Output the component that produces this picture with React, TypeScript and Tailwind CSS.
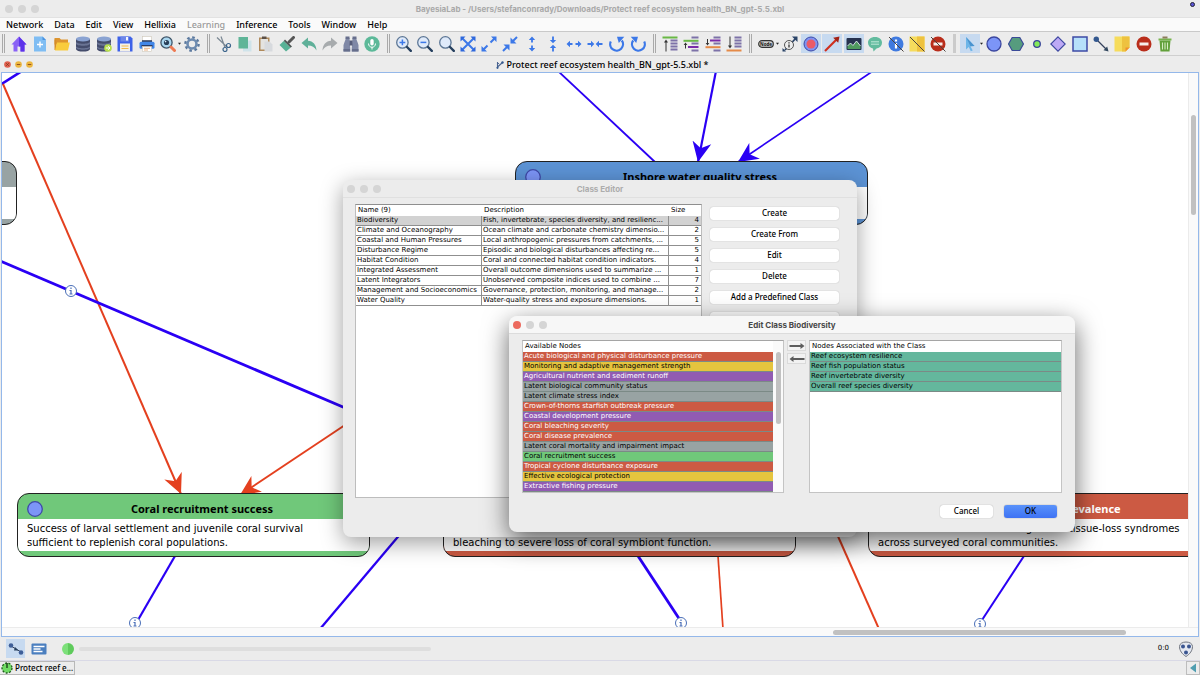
import { useState } from "react";
import type { ReactNode } from "react";

const menus = ["Network", "Data", "Edit", "View", "Hellixia", "Learning", "Inference", "Tools", "Window", "Help"];

const classes = [
  { name: "Biodiversity", description: "Fish, invertebrate, species diversity, and resilienc...", size: 4 },
  { name: "Climate and Oceanography", description: "Ocean climate and carbonate chemistry dimensio...", size: 2 },
  { name: "Coastal and Human Pressures", description: "Local anthropogenic pressures from catchments, ...", size: 5 },
  { name: "Disturbance Regime", description: "Episodic and biological disturbances affecting re...", size: 5 },
  { name: "Habitat Condition", description: "Coral and connected habitat condition indicators.", size: 4 },
  { name: "Integrated Assessment", description: "Overall outcome dimensions used to summarize ...", size: 1 },
  { name: "Latent Integrators", description: "Unobserved composite indices used to combine ...", size: 7 },
  { name: "Management and Socioeconomics", description: "Governance, protection, monitoring, and manage...", size: 2 },
  { name: "Water Quality", description: "Water-quality stress and exposure dimensions.", size: 1 },
];

const red = "bg-[#cc5a43] text-white";
const yellow = "bg-[#e5c43e] text-black";
const purple = "bg-[#915bb2] text-white";
const gray = "bg-[#98a3a3] text-black";
const green = "bg-[#70c87a] text-black";
const teal = "bg-[#64b79d] text-black";

const availableNodes = [
  { name: "Acute biological and physical disturbance pressure", color: red },
  { name: "Monitoring and adaptive management strength", color: yellow },
  { name: "Agricultural nutrient and sediment runoff", color: purple },
  { name: "Latent biological community status", color: gray },
  { name: "Latent climate stress index", color: gray },
  { name: "Crown-of-thorns starfish outbreak pressure", color: red },
  { name: "Coastal development pressure", color: purple },
  { name: "Coral bleaching severity", color: red },
  { name: "Coral disease prevalence", color: red },
  { name: "Latent coral mortality and impairment impact", color: gray },
  { name: "Coral recruitment success", color: green },
  { name: "Tropical cyclone disturbance exposure", color: red },
  { name: "Effective ecological protection", color: yellow },
  { name: "Extractive fishing pressure", color: purple },
];

const classNodes = [
  { name: "Reef ecosystem resilience", color: teal },
  { name: "Reef fish population status", color: teal },
  { name: "Reef invertebrate diversity", color: teal },
  { name: "Overall reef species diversity", color: teal },
];

const graphNodes = [
  { title: "", body: "", color: "bg-[#98a3a3] text-black", place: "left-[-338px] top-[88px]" },
  { title: "Inshore water quality stress", body: "", color: "bg-[#5c93d5] text-black", place: "left-[513px] top-[88px]" },
  {
    title: "Coral recruitment success",
    body: "Success of larval settlement and juvenile coral survival\nsufficient to replenish coral populations.",
    color: "bg-[#70c87a] text-black",
    place: "left-[15px] top-[420px]",
  },
  {
    title: "Coral bleaching severity",
    body: "Severity of coral bleaching ranging from no visible\nbleaching to severe loss of coral symbiont function.",
    color: "bg-[#cc5a43] text-white",
    place: "left-[441px] top-[420px]",
  },
  {
    title: "Coral disease prevalence",
    body: "Prevalence of coral disease signs and tissue-loss syndromes\nacross surveyed coral communities.",
    color: "bg-[#cc5a43] text-white",
    place: "left-[866px] top-[420px]",
  },
];

const blueLine = "#2a00f4";
const redLine = "#e4401f";

const edges = [
  { from: [0, 85], to: [22, 71], color: blueLine, width: 2.6, arrow: false },
  { from: [3, 84], to: [181, 494], color: redLine, width: 2, arrow: true },
  { from: [360, 415], to: [240, 495], color: redLine, width: 2, arrow: true },
  { from: [0, 261], to: [350, 410], color: blueLine, width: 2.8, arrow: false },
  { from: [558, 71], to: [655, 162], color: blueLine, width: 1.8, arrow: false },
  { from: [716, 71], to: [698, 162], color: blueLine, width: 2.2, arrow: true },
  { from: [873, 71], to: [738, 162], color: blueLine, width: 1.7, arrow: true },
  { from: [175, 556], to: [138, 620], color: blueLine, width: 2.2, arrow: false },
  { from: [402, 532], to: [320, 629], color: blueLine, width: 2.3, arrow: false },
  { from: [638, 556], to: [680, 620], color: blueLine, width: 2.8, arrow: false },
  { from: [718, 556], to: [723, 629], color: redLine, width: 1.7, arrow: false },
  { from: [837, 534], to: [879, 629], color: redLine, width: 2, arrow: false },
  { from: [1024, 556], to: [982, 620], color: blueLine, width: 2, arrow: false },
];

const infoPins = [[71, 291], [135, 623], [681, 623], [980, 624]];

/* ---------- Icons ---------- */

const lens = (
  <>
    <circle cx="6.400" cy="6.400" r="5.700" fill="#dfeafa" stroke="#5d7796" strokeWidth="1.300" />
    <path d="M11 11l3.800 3.800" stroke="#26405f" strokeWidth="2.400" strokeLinecap="round" />
  </>
);

const slash = <path d="M1 1l14.500 14.500" stroke="#4b4440" strokeWidth="1" />;

const database = (
  <>
    <path d="M1 3v10c0 3.400 14 3.400 14 0V3z" fill="#444c6b" />
    <path d="M1 5.500c0 3 14 3 14 0v2c0 3-14 3-14 0zM1 10c0 3 14 3 14 0v1.500c0 3-14 3-14 0z" fill="#6a7494" />
    <ellipse cx="8" cy="3" rx="7" ry="2.600" fill="#8aa3d2" />
  </>
);

const noEntry = (
  <>
    <circle cx="8" cy="8" r="7.500" fill="#b92d1b" />
    <rect x="3.500" y="6.500" width="9" height="3" fill="#f6ece9" />
  </>
);

const note = (
  <>
    <path d="M.5.5h15v11l-4 4H.5z" fill="#f6dc5c" />
    <path d="M8 .5h7.500v11l-4 4H8z" fill="#eec23f" />
    <path d="M11.500 11.500h4l-4 4z" fill="#f0902f" />
  </>
);

const levels = <path d="M8.500 4.500h7M8.500 7.500h7M8.500 10.500h7M8.500 13.500h7" stroke="#7d72a8" strokeWidth="2" />;

const arrowStroke = { stroke: "#3c78e8", strokeWidth: 1.5, fill: "none" };

const icons: Record<string, ReactNode> = {
  Home: (
    <>
      <path d="M8 .5L.5 8.500h2V15.500h4v-5h3v5h4v-7h2z" fill="#8a62f5" />
      <path d="M8 .5l7.500 8h-2v7h-4v-5H8z" fill="#5d33ea" />
    </>
  ),
  "New network": (
    <>
      <path d="M2 .5h8.500l3.500 3.500v11.500H2z" fill="#7fbdf3" />
      <path d="M10.500.5L14 4h-3.500z" fill="#4b93e0" />
      <path d="M8 5.500v6M5 8.500h6" stroke="#fff" strokeWidth="1.400" />
    </>
  ),
  Open: (
    <>
      <path d="M.5 2h5l1.500 1.500h7v5H.5z" fill="#dd9530" />
      <path d="M.5 14V3.500h1.500L3 14z" fill="#d58c28" />
      <path d="M3 6.500h12.800L14 14.500H1z" fill="#f9cc3d" />
    </>
  ),
  "Open data": database,
  "Import data": (
    <>
      {database}
      <circle cx="12" cy="12" r="3.800" fill="#b7df4c" />
      <path d="M9.800 12h4M12.200 10.200l1.800 1.800-1.800 1.800" stroke="#fff" strokeWidth="1" fill="none" />
    </>
  ),
  Save: (
    <>
      <path d="M.5.5h13l2 2v13H.5z" fill="#3e62e8" />
      <rect x="3.500" y=".5" width="8.500" height="5" fill="#6d86e9" />
      <rect x="9" y="1" width="2" height="3.500" fill="#f4f6ff" />
      <rect x="3" y="7.500" width="10" height="8" fill="#f3f0e8" />
      <path d="M4.500 10h7M4.500 12.500h7" stroke="#f2b84a" strokeWidth="1.200" />
    </>
  ),
  Print: (
    <>
      <rect x="3.500" y=".5" width="9" height="6" fill="#fff" stroke="#cfc8ba" strokeWidth=".6" />
      <rect x="3" y="4.200" width="10" height="1.800" fill="#33415f" />
      <rect x=".5" y="5.800" width="15" height="7" rx="1.500" fill="#4287e8" />
      <rect x="2.500" y="9" width="11" height="1.800" fill="#2c3b63" />
      <rect x="3.500" y="10.500" width="9" height="5" fill="#fff" stroke="#cfc8ba" strokeWidth=".6" />
      <path d="M5 12.300h6M5 14h4" stroke="#e8a978" strokeWidth=".9" />
    </>
  ),
  Preview: (
    <>
      <circle cx="6.500" cy="6.500" r="5.600" fill="#a9d6ef" stroke="#3d5468" strokeWidth="1.300" />
      <circle cx="6.500" cy="6.500" r="2.600" fill="#28405a" />
      <circle cx="5.600" cy="5.600" r=".8" fill="#dff1fb" />
      <path d="M11 11l3.500 3.500" stroke="#ee7a53" strokeWidth="3" strokeLinecap="round" />
    </>
  ),
  Settings: (
    <>
      <circle cx="8" cy="8" r="6.600" fill="none" stroke="#5a789e" strokeWidth="2.400" strokeDasharray="2.600 2.580" />
      <circle cx="8" cy="8" r="4.500" fill="none" stroke="#6d8bb0" strokeWidth="2.600" />
    </>
  ),
  Cut: (
    <>
      <path d="M1 1.500l9.500 9M5 .5l4 11" stroke="#7b8894" strokeWidth="1.200" />
      <circle cx="12.500" cy="9.500" r="2" fill="none" stroke="#3c658c" strokeWidth="1.200" />
      <circle cx="9" cy="13.500" r="2" fill="none" stroke="#3c658c" strokeWidth="1.200" />
    </>
  ),
  Copy: (
    <>
      <rect x="6" y="4.500" width="8.500" height="11" fill="#cfe3ea" />
      <rect x="1.500" y="1" width="9.500" height="11.500" fill="#5fb598" />
    </>
  ),
  Paste: (
    <>
      <rect x="1" y="1.500" width="10.500" height="13.500" fill="#b08a5b" />
      <rect x="2.500" y="3" width="7.500" height="10.500" fill="#e4e3e0" />
      <rect x="4" y=".5" width="4.500" height="2.500" fill="#5c5148" />
      <path d="M6.500 5.500h5l3 3v7h-8z" fill="#d7dade" />
    </>
  ),
  "Format painter": (
    <>
      <path d="M14.500 1.500L10 6" stroke="#555" strokeWidth="3" strokeLinecap="round" />
      <path d="M6 3.500l7 7-1.500 1.300L4.700 5z" fill="#4e5554" />
      <path d="M4.700 5l6.800 6.800-4.500 3.700L.5 9z" fill="#58b196" />
    </>
  ),
  Undo: <path d="M7 1.500L.5 7 7 12.500V9.500c4 0 6.500 1.500 8.500 5C15.300 8.500 12 5 7 4.700z" fill="#5fb099" />,
  Redo: <path d="M9 1.500L15.500 7 9 12.500V9.500c-4 0-6.500 1.500-8.500 5C.7 8.500 4 5 9 4.700z" fill="#a7abad" />,
  Find: (
    <>
      <path d="M3 2h3.500l1 13.500H.5V9z" fill="#7f88a6" />
      <path d="M13 2H9.500l-1 13.500h7V9z" fill="#7f88a6" />
      <rect x="6.500" y="4.500" width="3" height="5" fill="#565d7a" />
      <path d="M2.500.5h4V3h-4zM9.500.5h4V3h-4zM.5 13h6.500v2.500H.5zM9 13h6.500v2.500H9z" fill="#666e8c" />
    </>
  ),
  Dictate: (
    <>
      <circle cx="8" cy="8" r="7.700" fill="#5cb999" />
      <rect x="6.300" y="3" width="3.400" height="6.500" rx="1.700" fill="#fff" />
      <path d="M4.500 7.500c0 5 7 5 7 0M8 11v2.500" stroke="#fff" fill="none" />
    </>
  ),
  "Zoom in": <>{lens}<path d="M6.400 3.500v5.800M3.500 6.400h5.800" stroke="#3c78e8" strokeWidth="1.500" /></>,
  "Zoom out": <>{lens}<path d="M3.500 6.400h5.800" stroke="#3c78e8" strokeWidth="1.500" /></>,
  "Default zoom": lens,
  "Fit to window": (
    <>
      <path d="M2 2l12 12M14 2L2 14" {...arrowStroke} strokeWidth="2" />
      <path d="M.5.500h5l-5 5zM15.500.5v5l-5-5zM.5 15.500v-5l5 5zM15.500 15.500h-5l5-5z" fill="#2f68dc" />
    </>
  ),
  Expand: (
    <>
      <path d="M2 14l4.500-4.500M9.500 6.500L14 2" {...arrowStroke} strokeWidth="2" />
      <path d="M15.500.5v5.500L10 .5zM.5 15.500V10L6 15.500z" fill="#3c78e8" />
    </>
  ),
  Shrink: (
    <>
      <path d="M1 15l4-4M11 5l4-4" {...arrowStroke} strokeWidth="2" />
      <path d="M7.500 8.500v6l-6-6zM8.500 7.500v-6l6 6z" fill="#3c78e8" />
    </>
  ),
  "Expand vertically": (
    <>
      <path d="M8 3v3.500M8 9.500V13" {...arrowStroke} strokeWidth="1.800" />
      <path d="M8 .5L11.200 4H4.800zM8 15.500l3.200-3.500H4.800z" fill="#3c78e8" />
    </>
  ),
  "Shrink vertically": (
    <>
      <path d="M8 .5v4M8 11.500v4" {...arrowStroke} strokeWidth="1.800" />
      <path d="M8 7.300L11.200 4H4.800zM8 8.700l3.200 3.300H4.800z" fill="#3c78e8" />
    </>
  ),
  "Expand horizontally": (
    <>
      <path d="M3 8h3.500M9.500 8H13" {...arrowStroke} strokeWidth="1.800" />
      <path d="M.5 8L4 4.800v6.400zM15.500 8L12 4.800v6.400z" fill="#3c78e8" />
    </>
  ),
  "Shrink horizontally": (
    <>
      <path d="M.5 8h4M11.500 8h4" {...arrowStroke} strokeWidth="1.800" />
      <path d="M7.300 8L4 4.800v6.400zM8.700 8L12 4.800v6.400z" fill="#3c78e8" />
    </>
  ),
  "Rotate left": (
    <>
      <path d="M1.800 5.500a6.400 6.400 0 1 0 11-1" {...arrowStroke} strokeWidth="2.200" />
      <path d="M8 .8h7.300L9.800 7z" fill="#3c78e8" />
    </>
  ),
  "Rotate right": (
    <>
      <path d="M14.200 5.500a6.400 6.400 0 1 1-11-1" {...arrowStroke} strokeWidth="2.200" />
      <path d="M8 .8H.7L6.200 7z" fill="#3c78e8" />
    </>
  ),
  "To first level": (
    <>
      {levels}
      <path d="M.5 1.500h15" stroke="#69b845" strokeWidth="2" />
      <path d="M4 15.500V5" stroke="#333" />
      <path d="M4 3.500l2 3H2z" fill="#333" />
    </>
  ),
  "Up one level": (
    <>
      <path d="M8.500 1.500h7M8.500 7.500h7M8.500 14.500h7" stroke="#7d72a8" strokeWidth="2" />
      <path d="M.5 4.800h15" stroke="#69b845" strokeWidth="2" />
      <path d="M5 11h10.500" stroke="#7a2ba8" strokeWidth="2" />
      <path d="M2.500 12.500V8" stroke="#333" />
      <path d="M2.500 6.500l1.800 2.500H.7z" fill="#333" />
    </>
  ),
  "Down one level": (
    <>
      <path d="M8.500 1.500h7M8.500 7.500h7M8.500 14.500h7" stroke="#7d72a8" strokeWidth="2" />
      <path d="M.5 11.200h15" stroke="#e58a48" strokeWidth="2" />
      <path d="M5 4.500h10.500" stroke="#7a2ba8" strokeWidth="2" />
      <path d="M2.500 3v5" stroke="#333" />
      <path d="M2.500 9.500L4.300 7H.7z" fill="#333" />
    </>
  ),
  "To last level": (
    <>
      <path d="M8.500 1.500h7M8.500 4.500h7M8.500 7.500h7M8.500 10.500h7" stroke="#7d72a8" strokeWidth="2" />
      <path d="M.5 14.500h15" stroke="#e58a48" strokeWidth="2" />
      <path d="M4 .5V11" stroke="#333" />
      <path d="M4 12.500l2-3H2z" fill="#333" />
    </>
  ),
  "Node style": (
    <>
      <rect x=".7" y="4.700" width="14.600" height="6.600" rx="3.300" fill="#cfcfcf" stroke="#333" strokeWidth="1.200" />
      <text x="8" y="9.800" textAnchor="middle" fontSize="4.500" fontWeight="bold" fill="#111">Node</text>
    </>
  ),
  "Arc comments": (
    <>
      <path d="M3 14L14 2" stroke="#2a4468" strokeWidth="1.800" />
      <path d="M15.500.5v5.500L10 .5zM.5 15.500v-3.500L4 15.500z" fill="#2a4468" />
      <circle cx="7" cy="9" r="4.500" fill="#eee" stroke="#444" strokeWidth=".9" />
      <path d="M7 8.500v3M7 6.300v1.100" stroke="#222" strokeWidth="1.200" />
    </>
  ),
  "Node colors": (
    <>
      <circle cx="8" cy="8" r="7" fill="#7f93f2" stroke="#3d4aa5" />
      <circle cx="8" cy="8" r="4.500" fill="#ea5b68" />
    </>
  ),
  "Arc colors": (
    <>
      <path d="M1 15L13 3" stroke="#cf2f1e" strokeWidth="2.200" />
      <path d="M15.500.5l-1.300 6.300L9.200 1.800z" fill="#a32216" />
    </>
  ),
  Images: (
    <>
      <rect x=".5" y="2" width="15" height="12" rx="1" fill="#26324f" />
      <path d="M1.500 10l3-3 2.500 2.500 3.500-4.500 4 5v3h-13z" fill="#4f9a5e" />
      <path d="M1.500 10l3-3 2.500 2.500 3.500-4.500 4 5" stroke="#dfe8ee" strokeWidth=".9" fill="none" />
    </>
  ),
  Comments: (
    <>
      <path d="M8 1C3.500 1 1 3.500 1 6.800c0 3 2 5 5 5.700L6.500 15.500l3-3c3.500-.5 5.500-2.700 5.500-5.700C15 3.500 12.500 1 8 1z" fill="#62bb9e" />
      <path d="M4 5.800h8M4 8.200h8" stroke="#bfe8d9" />
    </>
  ),
  "Hide info": (
    <>
      <circle cx="8" cy="8" r="7.500" fill="#3f7ae0" />
      <path d="M8 7v5.500M8 3.500v2" stroke="#fff" strokeWidth="2.200" />
      {slash}
    </>
  ),
  "Hide notes": (
    <>
      <path d="M.5.5h15v15H.5z" fill="#f6dc5c" />
      <path d="M8 .5h7.500v15H8z" fill="#eec23f" />
      {slash}
    </>
  ),
  "Hide forbidden arcs": <>{noEntry}{slash}</>,
  Select: (
    <>
      <path d="M4 1l8.500 9-4 .2 2.200 4.300-1.900.8-2-4.400L4 13.500z" fill="#6db5e8" />
      <path d="M4 1l8.500 9-4 .2z" fill="#4a93cf" />
    </>
  ),
  "Create node": <circle cx="8" cy="8" r="7" fill="#7c95f7" stroke="#3b469f" strokeWidth="1.300" />,
  "Create function node": <path d="M4.200 1.500h7.600L15.500 8l-3.700 6.500H4.200L.5 8z" fill="#569c7e" stroke="#3a4a98" strokeWidth="1.200" />,
  "Create constraint": <circle cx="8" cy="8" r="3.300" fill="#84e85b" stroke="#37429a" strokeWidth="1.300" />,
  "Create utility": <path d="M8 .8L15.200 8 8 15.200.8 8z" fill="#bda9f5" stroke="#3b469f" strokeWidth="1.100" />,
  "Create decision": <rect x="1" y="1" width="14" height="14" fill="#b6e0fa" stroke="#3d4aa5" strokeWidth="1.500" />,
  "Create arc": (
    <>
      <path d="M3 3l10.500 10.500" stroke="#34415c" strokeWidth="1.200" />
      <circle cx="3.300" cy="3.300" r="2.700" fill="#33588f" />
      <path d="M15.500 15.500l-5-1.300 3.700-3.700z" fill="#33485f" />
    </>
  ),
  "Create note": note,
  "Forbid arc": noEntry,
  "Delete selection": (
    <>
      <path d="M2.500 4.500h11l-1 11h-9z" fill="#62a03b" />
      <path d="M5.500 6.500v7M8 6.500v7M10.500 6.500v7" stroke="#d4ecc2" strokeWidth="1.100" />
      <rect x="1.500" y="2.500" width="13" height="2" fill="#77b34d" />
      <rect x="5.500" y=".5" width="5" height="2" fill="#8d7d5c" />
    </>
  ),
};

const toolGroups = [
  { width: "w-[193px]", tools: ["Home", "New network", "Open", "Open data", "Import data", "Save", "Print", "Preview", "Settings"] },
  { width: "w-[168px]", tools: ["Cut", "Copy", "Paste", "Format painter", "Undo", "Redo", "Find", "Dictate"] },
  {
    width: "w-[254px]",
    tools: ["Zoom in", "Zoom out", "Default zoom", "Fit to window", "Expand", "Shrink", "Expand vertically", "Shrink vertically", "Expand horizontally", "Shrink horizontally", "Rotate left", "Rotate right"],
  },
  { width: "w-[84px]", tools: ["To first level", "Up one level", "Down one level", "To last level"] },
  {
    width: "w-[192px]",
    tools: ["Node style", "Arc comments", "Node colors", "Arc colors", "Images", "Comments", "Hide info", "Hide notes", "Hide forbidden arcs"],
  },
  {
    width: "w-[215px]",
    tools: ["Select", "Create node", "Create function node", "Create constraint", "Create utility", "Create decision", "Create arc", "Create note", "Forbid arc", "Delete selection"],
  },
];

const withDropdown = ["Preview", "Node style", "Select"];
const toggled = ["Node colors", "Arc colors", "Images", "Select"];

function ToolButton({ name }: { name: string }) {
  return (
    <button type="button" aria-label={name} className="flex h-5 shrink-0 items-center">
      <span className={`flex h-[19px] w-5 items-center justify-center ${toggled.includes(name) ? "bg-[#c7daf0]" : ""}`}>
        <svg viewBox="0 0 16 16" className="size-4">{icons[name]}</svg>
      </span>
      {withDropdown.includes(name) && (
        <svg viewBox="0 0 4 4" className="size-[3px]"><path d="M0 1h4L2 3.500z" fill="#222" /></svg>
      )}
    </button>
  );
}

function TrafficLights({ close }: { close: string }) {
  return (
    <div className="flex items-center gap-[5px]">
      <span className={`size-2 rounded-full ${close}`} />
      <span className="size-2 rounded-full bg-[#d5d5d5]" />
      <span className="size-2 rounded-full bg-[#d5d5d5]" />
    </div>
  );
}

function GraphNode({ title, body, color, place }: { title: string; body: string; color: string; place: string }) {
  return (
    <div className={`absolute flex h-16 w-[353px] flex-col overflow-hidden rounded-xl border border-[#222] ${place} ${color}`}>
      <div className="flex h-[25px] shrink-0 items-center pt-1 pl-[9px]">
        <svg viewBox="0 0 16 16" className="size-4 shrink-0">
          <circle cx="8" cy="8" r="7.300" fill="#7c95f7" stroke="#3f49a8" strokeWidth="1.300" />
        </svg>
        <h3 className="flex-1 pr-2 text-center text-[11px] leading-4 font-bold">{title}</h3>
      </div>
      <p className="flex-1 bg-white px-[9px] pt-[3px] font-['DejaVu_Sans'] text-[10px] leading-[14px] whitespace-pre-line text-black">{body}</p>
      <div className="h-[5px] shrink-0" />
    </div>
  );
}

function Graph() {
  return (
    <div className="relative min-w-0 flex-1 overflow-hidden bg-white">
      <svg className="absolute inset-0 size-full">
        <defs>
          {[{ id: "blue-tip", fill: blueLine }, { id: "red-tip", fill: redLine }].map((tip) => (
            <marker key={tip.id} id={tip.id} markerUnits="userSpaceOnUse" markerWidth="20" markerHeight="20" refX="20" refY="10" orient="auto">
              <path d="M20 10L0 .5 6 10 0 19.500z" fill={tip.fill} />
            </marker>
          ))}
        </defs>
        <g transform="translate(-2 -73)">
          {edges.map((e, index) => (
            <line
              key={index}
              x1={e.from[0]}
              y1={e.from[1]}
              x2={e.to[0]}
              y2={e.to[1]}
              stroke={e.color}
              strokeWidth={e.width}
              markerEnd={e.arrow ? (e.color === blueLine ? "url(#blue-tip)" : "url(#red-tip)") : undefined}
            />
          ))}
          {infoPins.map(([x, y]) => (
            <g key={`${x}-${y}`} stroke="#4a6fb8">
              <circle cx={x} cy={y} r="5.500" fill="#fff" />
              <path d={`M${x} ${y - 3.5}v1.500M${x - 1.5} ${y - 0.5}h1.500v3.500M${x - 1.5} ${y + 3}h3`} fill="none" strokeWidth="1.200" />
            </g>
          ))}
        </g>
      </svg>
      {graphNodes.map((node) => (
        <GraphNode key={node.place} {...node} />
      ))}
    </div>
  );
}

function NodeTable({ title, rows, scroll }: { title: string; rows: { name: string; color: string }[]; scroll?: boolean }) {
  return (
    <div
      className={`flex h-[153px] border border-t-[#a5a5a5] border-[#c4c4c4] bg-white font-['DejaVu_Sans'] text-[7px] ${scroll ? "w-[262px] shrink-0" : "min-w-0 flex-1"}`}
    >
      <table className="h-fit flex-1 table-fixed border-separate border-spacing-0">
        <thead>
          <tr>
            <th className="h-[11px] p-0 pl-[2px] text-left leading-[11px] font-normal">{title}</th>
          </tr>
        </thead>
        <tbody>
          {rows.map((row) => (
            <tr key={row.name}>
              <td className={`border-b border-[#7b8a86] p-0 pl-px leading-[9px] whitespace-nowrap ${row.color}`}>{row.name}</td>
            </tr>
          ))}
        </tbody>
      </table>
      {scroll && (
        <div className="flex w-[10px] justify-center bg-[#fafafa] pt-[11px]">
          <div className="h-[72px] w-[5px] rounded-full bg-[#c1c1c1]" />
        </div>
      )}
    </div>
  );
}

function ClassEditor() {
  const [selected, setSelected] = useState("Biodiversity");

  return (
    <section className="absolute top-[180px] left-[343px] flex h-[357px] w-[514px] flex-col rounded-lg bg-[#ececec] shadow-[0_6px_22px_rgba(0,0,0,0.38)]">
      <header className="grid h-[18px] shrink-0 grid-cols-3 items-center border-b border-[#e0e0e0] px-1">
        <TrafficLights close="bg-[#d5d5d5]" />
        <h2 className="text-center font-['Inter'] text-[8px] leading-3 font-bold text-[#adadad]">Class Editor</h2>
      </header>
      <div className="flex min-h-0 flex-1 pt-[6px] pr-[18px] pb-[39px] pl-3">
        <div className="w-[347px] shrink-0 border border-t-[#8f8f8f] border-[#bdbdbd] bg-white font-['DejaVu_Sans'] text-[7px]">
          <table className="w-full table-fixed border-separate border-spacing-0">
            <thead>
              <tr className="text-left leading-[11px]">
                <th className="w-[126px] p-0 pl-[2px] font-normal">Name (9)</th>
                <th className="p-0 pl-[2px] font-normal">Description</th>
                <th className="w-[32px] p-0 pl-[2px] font-normal">Size</th>
              </tr>
            </thead>
            <tbody>
              {classes.map((c) => (
                <tr
                  key={c.name}
                  onClick={() => setSelected(c.name)}
                  className={`leading-[9px] whitespace-nowrap ${selected === c.name ? "bg-[#d2d2d2]" : ""}`}
                >
                  <td className="border-r border-b border-[#8f8f8f] p-0 pl-px">{c.name}</td>
                  <td className="overflow-hidden border-r border-b border-[#8f8f8f] p-0 pl-px">{c.description}</td>
                  <td className="border-b border-[#8f8f8f] p-0 pr-[2px] text-right">{c.size}</td>
                </tr>
              ))}
            </tbody>
          </table>
        </div>
        <div className="flex flex-1 flex-col gap-2 pt-[3px] pl-2 text-[8px]">
          {["Create", "Create From", "Edit", "Delete", "Add a Predefined Class"].map((label) => (
            <button key={label} type="button" className="h-[13px] rounded-[3px] bg-white pb-[2px] leading-[11px] font-medium shadow-[0_0_1px_rgba(0,0,0,0.35)]">
              {label}
            </button>
          ))}
          <button type="button" aria-label="More" className="h-[13px] rounded-[3px] bg-white shadow-[0_0_1px_rgba(0,0,0,0.35)]" />
        </div>
      </div>
    </section>
  );
}

function EditClass() {
  return (
    <section className="absolute top-[316px] left-[509px] flex h-[216px] w-[566px] flex-col rounded-lg bg-[#ececec] shadow-[0_8px_26px_rgba(0,0,0,0.6)]">
      <header className="grid h-[18px] shrink-0 grid-cols-3 items-center rounded-t-lg border-b border-[#dcdcdc] bg-[#f7f7f7] px-1">
        <TrafficLights close="bg-[#ec6a5e]" />
        <h2 className="text-center font-['Inter'] text-[8px] leading-3 font-bold text-[#484848]">Edit Class Biodiversity</h2>
      </header>
      <div className="flex px-[13px] pt-[6px]">
        <NodeTable title="Available Nodes" rows={availableNodes} scroll />
        <div className="flex flex-col gap-[2px] px-[3px]">
          {["Add", "Remove"].map((label) => (
            <button key={label} type="button" aria-label={label} className="flex h-[11px] w-[19px] items-center justify-center border border-[#dadada] bg-[#f2f2f2]">
              <svg viewBox="0 0 16 6" className={`h-[6px] w-4 ${label === "Remove" ? "rotate-180" : ""}`}>
                <path d="M.5 2h11V0l4 3-4 3V4H.5z" fill="#5c5c5c" />
              </svg>
            </button>
          ))}
        </div>
        <NodeTable title="Nodes Associated with the Class" rows={classNodes} />
      </div>
      <footer className="flex justify-end gap-[11px] px-[18px] pt-3 text-[8px] leading-[11px] font-medium">
        <button type="button" className="h-[13px] w-[53px] rounded-[3px] bg-white pb-[2px] shadow-[0_0_1px_rgba(0,0,0,0.4)]">Cancel</button>
        <button type="button" className="h-[13px] w-[53px] rounded-[3px] bg-linear-to-b from-[#5a92fa] to-[#3e72f4] pb-[2px] shadow-[0_0_1px_rgba(0,0,0,0.6)]">OK</button>
      </footer>
    </section>
  );
}

export default function App() {
  return (
    <div className="relative flex h-screen w-full flex-col overflow-hidden bg-[#ececec] font-['Noto_Sans',sans-serif] text-black">
      <header className="flex h-[18px] shrink-0 items-center border-b border-[#e2e2e2] px-[5px]">
        <TrafficLights close="bg-[#d5d5d5]" />
        <h1 className="flex-1 pr-[29px] text-center font-['Inter'] text-[8px] leading-3 font-bold text-[#a9a9a9]">
          BayesiaLab - /Users/stefanconrady/Downloads/Protect reef ecosystem health_BN_gpt-5.5.xbl
        </h1>
        <span className="mb-2 size-[5px] rounded-full border border-[#223] bg-[#5b55d8]" />
      </header>

      <nav className="flex h-[14px] shrink-0 items-center gap-[11px] border-b border-[#c9c9c9] bg-[#fafafa] px-[6px] text-[9px] leading-3 font-medium">
        {menus.map((menu) => (
          <button key={menu} type="button" className={menu === "Learning" ? "text-[#999]" : ""} disabled={menu === "Learning"}>
            {menu}
          </button>
        ))}
      </nav>

      <div className="flex h-6 shrink-0 items-center border-b border-[#cfcfcf] pl-[2px]">
        {toolGroups.map((group, index) => (
          <div key={group.width} className="flex items-center">
            <span className={`mr-1 h-[19px] w-[3px] ${index === 5 ? "bg-[#cbcbcb]" : "border-x border-[#a9a9a9]"}`} />
            <div className={`mr-[5px] flex items-center justify-between ${group.width}`}>
              {group.tools.map((tool) => (
                <ToolButton key={tool} name={tool} />
              ))}
            </div>
          </div>
        ))}
      </div>

      <div className="flex h-4 shrink-0 items-center px-1 pt-px">
        <div className="flex gap-[4px]">
          {["close", "minimize", "restore"].map((action) => (
            <button key={action} type="button" aria-label={action}>
              <svg viewBox="0 0 8 8" className="size-[7px]">
                <circle cx="4" cy="4" r="3.800" fill={action === "close" ? "#e0604f" : "#ecb640"} />
                <path d={action === "close" ? "M2.500 2.500l3 3M5.500 2.500l-3 3" : "M2 4h4"} stroke="#7a3a1c" strokeWidth=".9" />
              </svg>
            </button>
          ))}
        </div>
        <div className="flex flex-1 items-center justify-center gap-[2px] pr-6 text-[9px] leading-3 font-medium">
          <svg viewBox="0 0 8 8" className="size-2">
            <path d="M1.500 1v6M1.500 6L6.500 1.500M1 1.500l2 1" stroke="#4a6491" strokeWidth="1.100" fill="none" />
            <circle cx="6.500" cy="1.500" r="1.200" fill="#33588f" />
            <circle cx="1.500" cy="6.800" r="1.100" fill="#33588f" />
          </svg>
          Protect reef ecosystem health_BN_gpt-5.5.xbl *
        </div>
      </div>

      <main className="mr-px ml-px flex min-h-0 flex-1 flex-col border border-[#94b8ea]">
        <div className="flex min-h-0 flex-1">
          <Graph />
          <div className="w-[10px] border-l border-[#ebebeb] bg-[#fafafa] pt-[42px] pl-[2px]">
            <div className="h-[100px] w-[5px] rounded-full bg-[#c1c1c1]" />
          </div>
        </div>
        <div className="flex h-[9px] shrink-0 items-center justify-end border-t border-[#ebebeb] bg-[#fafafa] pr-[72px]">
          <div className="h-[5px] w-[293px] rounded-full bg-[#c1c1c1]" />
        </div>
      </main>

      <div className="flex h-[23px] shrink-0 items-center px-[6px]">
        <button type="button" aria-label="Modeling mode" className="flex size-[19px] items-center justify-center bg-[#c7daf0]">
          <svg viewBox="0 0 16 16" className="size-4">
            <path d="M3 5l10 6" stroke="#34415c" strokeWidth="1" />
            <circle cx="3" cy="4.500" r="2.300" fill="#3f5f98" />
            <circle cx="13" cy="11.500" r="2.300" fill="#3f5f98" />
            <path d="M7 6l3.500 3.500H6z" fill="#26405f" />
          </svg>
        </button>
        <button type="button" aria-label="Validation mode" className="ml-[6px]">
          <svg viewBox="0 0 16 12" className="h-3 w-4">
            <rect x=".5" y=".5" width="15" height="11" rx="1" fill="#4b7fbf" />
            <path d="M2.500 3.500h11M2.500 6h7M2.500 8.500h9" stroke="#fff" strokeWidth="1.300" />
          </svg>
        </button>
        <span className="ml-[15px] size-3 rounded-full bg-[linear-gradient(90deg,#7de07a_50%,#5fcb5c_50%)]" />
        <span className="ml-[5px] h-1 w-[352px] rounded-full bg-[#dedede]" />
        <span className="ml-auto font-['DejaVu_Sans'] text-[7px]">0:0</span>
        <svg viewBox="0 0 16 16" className="ml-[9px] size-4">
          <path d="M8 15.500C4 13 1.500 9.500 1.500 5.500c0-6 13-6 13 0 0 4-2.500 7.500-6.500 10z" fill="#e4e8f0" stroke="#70757f" />
          <circle cx="5" cy="5.500" r="2" fill="#3a5590" />
          <circle cx="11" cy="5.500" r="2" fill="#3a5590" />
          <circle cx="8" cy="11.500" r="2" fill="#3a5590" />
        </svg>
      </div>

      <footer className="flex h-[15px] shrink-0 items-center justify-between border-t border-[#d9d9e6]">
        <button type="button" className="flex h-[14px] items-center gap-[2px] border border-l-0 border-[#b8b8b8] px-px text-[8px] leading-3 font-medium">
          <svg viewBox="0 0 12 12" className="size-3">
            <circle cx="6" cy="6" r="5" fill="#6fdc63" stroke="#1f5a1c" strokeWidth="1.300" strokeDasharray="2 1.500" />
            <path d="M6 1v5" stroke="#1d3d1b" strokeWidth="1.400" />
          </svg>
          Protect reef e...
        </button>
        <button type="button" aria-label="Show panel" className="flex size-[14px] items-center justify-center border border-[#bdbdbd]">
          <svg viewBox="0 0 8 12" className="h-[10px] w-[6px]"><path d="M8 0v12L0 6z" fill="#4f9db0" /></svg>
        </button>
      </footer>

      <ClassEditor />
      <EditClass />
    </div>
  );
}
